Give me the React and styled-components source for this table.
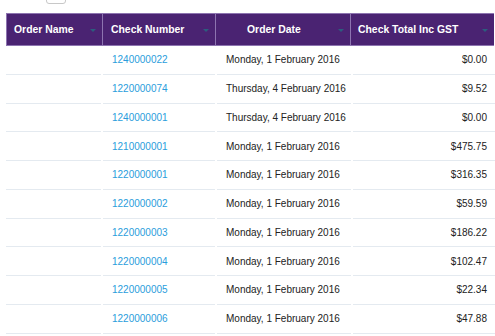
import React from "react";
import styled, { createGlobalStyle } from "styled-components";

const Global = createGlobalStyle`
  html, body { margin: 0; padding: 0; background: #fff; }
  body { font-family: "Liberation Sans", Arial, sans-serif; }
`;

const Page = styled.div`
  width: 495px;
  height: 336px;
  overflow: hidden;
  padding-left: 6px;
  box-sizing: border-box;
`;

const TopBar = styled.div`
  height: 13px;
  display: flex;
  align-items: flex-start;
`;

const SizeBox = styled.div`
  width: 18px;
  height: 16px;
  margin-left: 40px;
  margin-top: -14px;
  border: 1px solid #c8c8c8;
  border-radius: 3px;
  background: #fff;
`;

const cols = "95px 112px 134px 143px";

const Header = styled.div`
  display: grid;
  grid-template-columns: ${cols};
  gap: 1px;
  padding: 1px;
  background: #8d74b0;
  width: 488px;
  box-sizing: border-box;
`;

const HeadCell = styled.div`
  height: 31px;
  background: #4a2372;
  color: #fff;
  font-weight: bold;
  font-size: 10.4px;
  display: flex;
  align-items: center;
  padding-left: ${(p) => p.$pl}px;
  padding-right: 6px;
  position: relative;
`;

const Arrow = styled.span`
  position: absolute;
  right: 6px;
  top: 15px;
  width: 0;
  height: 0;
  border-left: 3px solid transparent;
  border-right: 3px solid transparent;
  border-top: 3px solid #2c5d7e;
`;

const Row = styled.div`
  display: grid;
  grid-template-columns: ${cols};
  column-gap: 2px;
  width: 488px;
  height: 28.75px;
`;

const Cell = styled.div`
  border-bottom: 1px solid #e4eaf0;
  display: flex;
  align-items: center;
  font-size: 10px;
  color: ${(p) => (p.$link ? "#2a9ddc" : "#222")};
  justify-content: ${(p) => (p.$right ? "flex-end" : "flex-start")};
  padding-left: ${(p) => (p.$right ? 0 : 9)}px;
  padding-right: ${(p) => (p.$right ? 9 : 0)}px;
`;

const rows = [
  ["1240000022", "Monday, 1 February 2016", "$0.00"],
  ["1220000074", "Thursday, 4 February 2016", "$9.52"],
  ["1240000001", "Thursday, 4 February 2016", "$0.00"],
  ["1210000001", "Monday, 1 February 2016", "$475.75"],
  ["1220000001", "Monday, 1 February 2016", "$316.35"],
  ["1220000002", "Monday, 1 February 2016", "$59.59"],
  ["1220000003", "Monday, 1 February 2016", "$186.22"],
  ["1220000004", "Monday, 1 February 2016", "$102.47"],
  ["1220000005", "Monday, 1 February 2016", "$22.34"],
  ["1220000006", "Monday, 1 February 2016", "$47.88"],
];

export default function App() {
  return (
    <Page>
      <Global />
      <TopBar>
        <SizeBox />
      </TopBar>
      <Header>
        <HeadCell $pl={7}>Order Name<Arrow /></HeadCell>
        <HeadCell $pl={8}>Check Number<Arrow /></HeadCell>
        <HeadCell $pl={31}>Order Date<Arrow /></HeadCell>
        <HeadCell $pl={7}>Check Total Inc GST<Arrow /></HeadCell>
      </Header>
      {rows.map((r) => (
        <Row key={r[0]}>
          <Cell />
          <Cell $link>{r[0]}</Cell>
          <Cell>{r[1]}</Cell>
          <Cell $right>{r[2]}</Cell>
        </Row>
      ))}
    </Page>
  );
}
